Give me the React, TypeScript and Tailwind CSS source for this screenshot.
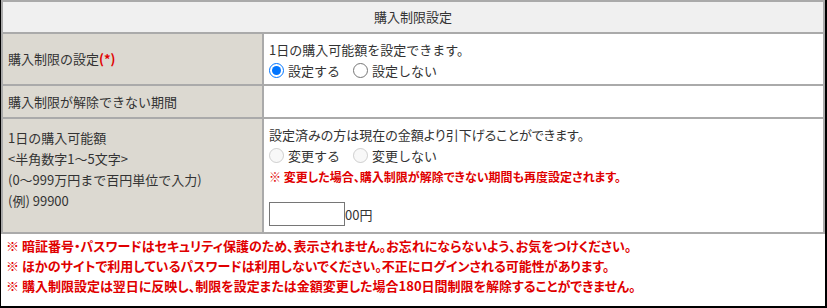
import React from "react";

export default function App() {
  const font = { fontFamily: '"Noto Sans CJK JP", "Noto Sans", sans-serif' };
  return (
    <div
      className="w-[827px] h-[308px] bg-white border-l border-r-2 border-b-2 border-black text-[13px] text-[#333] overflow-hidden"
      style={font}
    >
      <table className="w-[824px] border-collapse border-2 border-[#aaaaaa] ml-0">
        <tbody>
          <tr className="h-[32px]">
            <td colSpan={2} className="bg-[#f0f0f0] text-center border-2 border-[#aaaaaa]">
              購入制限設定
            </td>
          </tr>
          <tr className="h-[52px]">
            <td className="w-[261px] bg-[#dcd9d1] border-2 border-[#aaaaaa] pl-[5px]">
              購入制限の設定<span className="text-[#e00000] font-bold">(*)</span>
            </td>
            <td className="border-2 border-[#aaaaaa] pl-[5px] pt-[2px] leading-[21px]">
              <div>1日の購入可能額を設定できます。</div>
              <div className="flex items-center">
                <label className="flex items-center">
                  <input type="radio" name="a" defaultChecked className="w-[15px] h-[15px] m-0 mr-[4px] accent-[#0075ff]" />
                  設定する
                </label>
                <label className="flex items-center ml-[13px]">
                  <input type="radio" name="a" className="w-[15px] h-[15px] m-0 mr-[4px]" />
                  設定しない
                </label>
              </div>
            </td>
          </tr>
          <tr className="h-[33px]">
            <td className="bg-[#dcd9d1] border-2 border-[#aaaaaa] pl-[5px]">購入制限が解除できない期間</td>
            <td className="border-2 border-[#aaaaaa]"></td>
          </tr>
          <tr className="h-[115px]">
            <td className="bg-[#dcd9d1] border-2 border-[#aaaaaa] pl-[5px] align-top pt-[8px] leading-[21px]">
              <div>1日の購入可能額</div>
              <div>&lt;半角数字1～5文字&gt;</div>
              <div>(0～999万円まで百円単位で入力)</div>
              <div>(例) 99900</div>
            </td>
            <td className="border-2 border-[#aaaaaa] pl-[5px] align-top pt-[5px] leading-[21px]">
              <div className='[font-feature-settings:"palt"]'>設定済みの方は現在の金額より引下げることができます。</div>
              <div className="flex items-center">
                <label className="flex items-center text-[#333]">
                  <input type="radio" name="b" disabled className="w-[15px] h-[15px] m-0 mr-[4px]" />
                  変更する
                </label>
                <label className="flex items-center ml-[13px]">
                  <input type="radio" name="b" disabled className="w-[15px] h-[15px] m-0 mr-[4px]" />
                  変更しない
                </label>
              </div>
              <div className='text-[#e00000] font-bold text-[12px] [font-feature-settings:"palt"]'>※ 変更した場合、購入制限が解除できない期間も再度設定されます。</div>
              <div className="flex items-center mt-[15px]">
                <input type="text" className="w-[76px] h-[24px] border border-[#767676] bg-white" />
                <span>00円</span>
              </div>
            </td>
          </tr>
        </tbody>
      </table>
      <div className='pl-[5px] pt-[2px] text-[#e00000] font-bold text-[13px] leading-[20px] [font-feature-settings:"palt"]'>
        <div className="leading-[20px]">※ 暗証番号・パスワードはセキュリティ保護のため、表示されません。お忘れにならないよう、お気をつけください。</div>
        <div className="leading-[20px]">※ ほかのサイトで利用しているパスワードは利用しないでください。不正にログインされる可能性があります。</div>
        <div className="leading-[20px]">※ 購入制限設定は翌日に反映し、制限を設定または金額変更した場合180日間制限を解除することができません。</div>
      </div>
    </div>
  );
}
